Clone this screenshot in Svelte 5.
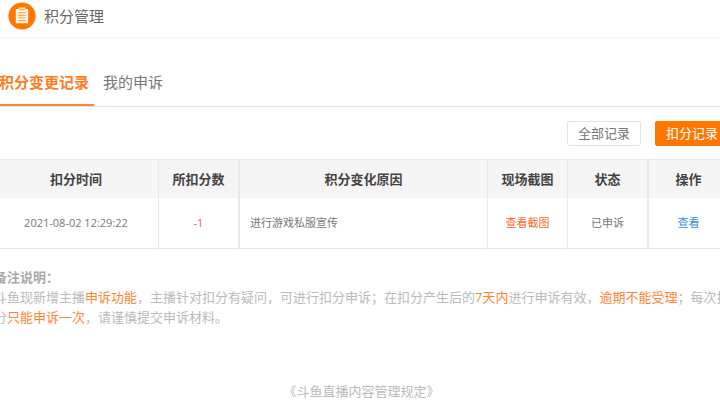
<script lang="ts">
	let activeTab = $state('records');
	let filter = $state('deduct');

	const tabs = [
		{ id: 'records', label: '积分变更记录' },
		{ id: 'appeals', label: '我的申诉' }
	];

	const filters = [
		{ id: 'all', label: '全部记录' },
		{ id: 'deduct', label: '扣分记录' }
	];

	const records = [
		{ time: '2021-08-02 12:29:22', score: '-1', reason: '进行游戏私服宣传', status: '已申诉' }
	];
</script>

<div class="page">
	<header>
		<svg class="logo" viewBox="0 0 28 28" aria-hidden="true">
			<circle cx="14" cy="14" r="13.6" fill="#ff7700" />
			<path d="M7.8 7h3V5.6h6.4V7h3v14.3H7.8z" fill="#fff3e6" />
			<path d="M11 7.7h6M10.2 10.7h7.6M10.2 13.3h7.6M10.2 15.9h7.6M10.2 18.5h7.6" stroke="#ff9a45" stroke-width="1" />
		</svg>
		<h1>积分管理</h1>
	</header>

	<main>
		<nav class="tabs">
			{#each tabs as tab}
				<button class="tab" class:active={activeTab === tab.id} onclick={() => (activeTab = tab.id)}>{tab.label}</button>
			{/each}
		</nav>

		<div class="filters">
			{#each filters as item}
				<button class="filter" class:selected={filter === item.id} onclick={() => (filter = item.id)}>{item.label}</button>
			{/each}
		</div>

		<table>
			<thead>
				<tr>
					<th class="time">扣分时间</th>
					<th class="score thick">所扣分数</th>
					<th>积分变化原因</th>
					<th class="shot">现场截图</th>
					<th class="status thick">状态</th>
					<th class="action">操作</th>
				</tr>
			</thead>
			<tbody>
				{#each records as record}
					<tr>
						<td>{record.time}</td>
						<td class="minus thick">{record.score}</td>
						<td class="reason">{record.reason}</td>
						<td><a class="orange" href="#shot">查看截图</a></td>
						<td class="thick">{record.status}</td>
						<td><a class="blue" href="#detail">查看</a></td>
					</tr>
				{/each}
			</tbody>
		</table>

		<section class="notes">
			<h2>备注说明：</h2>
			<p>斗鱼现新增主播<em>申诉功能</em>，主播针对扣分有疑问，可进行扣分申诉；在扣分产生后的<em>7天内</em>进行申诉有效，<em>逾期不能受理</em>；每次扣分<em>只能申诉一次</em>，请谨慎提交申诉材料。</p>
		</section>

		<footer>
			<a href="#rules">《斗鱼直播内容管理规定》</a>
		</footer>
	</main>
</div>

<style>
	:global(body) {
		background: #fff;
	}

	.page {
		overflow: hidden;
		color: #666;
		font-family: 'Open Sans', 'Noto Sans CJK SC', sans-serif;
		font-size: 13px;
		line-height: 20px;
	}

	header {
		display: flex;
		align-items: center;
		gap: 8px;
		padding: 2px 8px 7px;
		border-bottom: 1px solid #f2f2f2;
	}

	.logo {
		width: 28px;
		height: 28px;
	}

	h1 {
		margin: 0;
		font-size: 15px;
		font-weight: 400;
	}

	/* content runs a little past both window edges */
	main {
		margin: 0 -9px 0 -6px;
	}

	button {
		font-family: inherit;
		cursor: pointer;
	}

	.tabs {
		display: flex;
		gap: 4px;
		margin-top: 22px;
		border-bottom: 1px solid #e5e5e5;
	}

	.tab {
		padding: 12px 5px;
		border: 0;
		border-bottom: 2px solid transparent;
		background: none;
		color: #777;
		font-size: 15px;
		line-height: 20px;
	}

	.tab.active {
		border-bottom-color: #ff8534;
		color: #ff7d23;
		font-weight: 700;
	}

	.filters {
		display: flex;
		justify-content: flex-end;
		gap: 14px;
		padding: 14px 0 13px;
	}

	.filter {
		padding: 1px 10px;
		border: 1px solid #e5e5e5;
		border-radius: 2px;
		background: #fff;
		color: #777;
		font-size: 13px;
		line-height: 21px;
	}

	.filter.selected {
		border-color: #ff7700;
		background: #ff7700;
		color: #fff;
	}

	table {
		width: 100%;
		table-layout: fixed;
		border-collapse: collapse;
		border-top: 1px solid #ebebeb;
		border-bottom: 1px solid #e5e5e5;
		text-align: center;
	}

	th {
		padding: 9px 0;
		border-right: 1px solid #e8e8e8;
		background: #f5f5f5;
		color: #444;
		font-weight: 700;
	}

	td {
		padding: 15px 0;
		border-right: 1px solid #ebebeb;
		color: #777;
		font-size: 11px;
	}

	.thick {
		border-right: 2px solid #e8e8e8;
	}

	.time {
		width: 164px;
	}

	.score,
	.shot,
	.status,
	.action {
		width: 79px;
	}

	.reason {
		padding-left: 10px;
		text-align: left;
	}

	.minus {
		color: #ff4a5e;
	}

	a {
		text-decoration: none;
	}

	.orange {
		color: #ff6a2b;
	}

	.blue {
		color: #3490e6;
	}

	.notes {
		margin: 18px -6px 0 0;
		color: #bbb;
	}

	.notes h2 {
		margin: 0;
		color: #aaa;
		font-size: 13px;
		font-weight: 700;
	}

	.notes p {
		margin: 0;
	}

	em {
		color: #ff8534;
		font-style: normal;
	}

	footer {
		margin: 54px 0 3px;
		text-align: center;
	}

	footer a {
		color: #bbb;
	}
</style>
